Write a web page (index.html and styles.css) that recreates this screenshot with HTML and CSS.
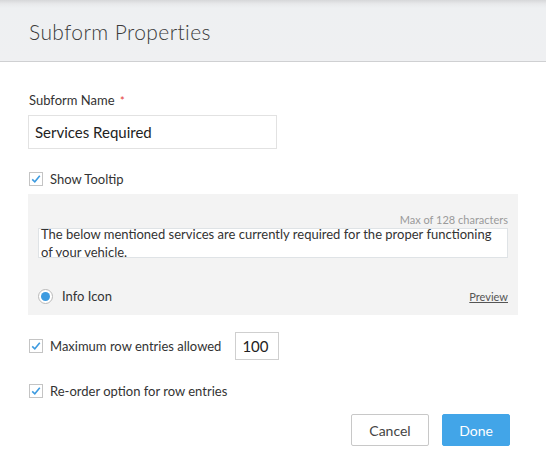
FILE: index.html
```html
<!DOCTYPE html>
<html>
<head>
<meta charset="utf-8">
<link rel="stylesheet" href="styles.css">
</head>
<body>
<div class="dialog">
  <div class="header"><h1 class="title">Subform Properties</h1></div>
  <div class="content">
    <div class="label">Subform Name <span class="req">*</span></div>
    <div class="text-input name-input">Services Required</div>
    <div class="check-row tooltip-row">
      <span class="cb"><svg width="14" height="14" viewBox="0 0 14 14"><rect x="0.5" y="0.5" width="13" height="13" fill="#fff" stroke="#c4c4c4"/><path d="M3.2 7.4 L5.8 9.8 L10.8 3.8" fill="none" stroke="#3d9be0" stroke-width="1.6"/></svg></span>
      <span>Show Tooltip</span>
    </div>
    <div class="panel">
      <div class="max-note">Max of 128 characters</div>
      <div class="textarea"><div class="ta-text">The below mentioned services are currently required for the proper functioning of your vehicle.</div></div>
      <div class="panel-foot">
        <div class="radio-row">
          <span class="radio"><span class="dot"></span></span>
          <span>Info Icon</span>
        </div>
        <span class="preview">Preview</span>
      </div>
    </div>
    <div class="check-row max-row">
      <span class="cb"><svg width="14" height="14" viewBox="0 0 14 14"><rect x="0.5" y="0.5" width="13" height="13" fill="#fff" stroke="#c4c4c4"/><path d="M3.2 7.4 L5.8 9.8 L10.8 3.8" fill="none" stroke="#3d9be0" stroke-width="1.6"/></svg></span>
      <span>Maximum row entries allowed</span>
      <div class="num-input">100</div>
    </div>
    <div class="check-row reorder-row">
      <span class="cb"><svg width="14" height="14" viewBox="0 0 14 14"><rect x="0.5" y="0.5" width="13" height="13" fill="#fff" stroke="#c4c4c4"/><path d="M3.2 7.4 L5.8 9.8 L10.8 3.8" fill="none" stroke="#3d9be0" stroke-width="1.6"/></svg></span>
      <span>Re-order option for row entries</span>
    </div>
    <div class="actions">
      <button class="btn cancel">Cancel</button>
      <button class="btn done">Done</button>
    </div>
  </div>
</div>
</body>
</html>
```
FILE: styles.css
```css
* { box-sizing: border-box; }
html, body { margin: 0; padding: 0; background: #fff; }
body { font-family: Lato, "Open Sans", sans-serif; color: #333; width: 546px; height: 460px; overflow: hidden; }
.dialog { width: 546px; }
.header {
  height: 62px;
  background: linear-gradient(to bottom, #d6d7d9 0px, #e8e9eb 4px, #eef0f2 8px, #eff0f2 100%);
  border-bottom: 1px solid #cfd0d2;
  display: flex;
  align-items: center;
  padding: 0 29px;
}
.title { margin: 0; font-size: 21px; font-weight: 300; color: #3a3a3a; letter-spacing: 0.4px; padding-top: 2px; }
.content { padding: 30px 28px 0 28px; }
.label { font-size: 13px; line-height: 16px; color: #333; padding-left: 1px; }
.req { color: #e53935; font-size: 11px; margin-left: 2px; }
.text-input {
  margin-top: 6px;
  width: 249px; height: 34px;
  border: 1px solid #e2e2e2;
  font-size: 15px; line-height: 32px;
  padding-left: 6px; color: #222;
}
.check-row { display: flex; align-items: center; font-size: 13px; color: #333; }
.cb { width: 14px; height: 14px; display: block; margin-left: 1px; margin-right: 7px; }
.cb svg { display: block; }
.tooltip-row { margin-top: 23px; height: 14px; }
.panel {
  margin-top: 8px;
  width: 490px; height: 121px;
  background: #f3f3f3;
  padding: 19px 10px 0 10px;
}
.max-note { text-align: right; font-size: 11px; line-height: 14px; color: #9a9a9a; }
.textarea {
  margin-top: 1px;
  height: 30px;
  background: #fff;
  border: 1px solid #dfe3e6;
  padding: 0 2px; overflow: hidden;
}
.ta-text { font-size: 13px; line-height: 18px; color: #333; margin-top: -4px; }
.panel-foot { margin-top: 30px; display: flex; align-items: center; justify-content: space-between; height: 16px; }
.radio-row { display: flex; align-items: center; font-size: 13px; }
.radio {
  width: 15px; height: 15px; border-radius: 50%;
  border: 1px solid #b9b9b9; background: #fff;
  display: flex; align-items: center; justify-content: center;
  margin-right: 9px;
}
.dot { width: 9px; height: 9px; border-radius: 50%; background: #3d9be0; }
.preview { font-size: 11px; color: #555; text-decoration: underline; }
.max-row { margin-top: 17px; height: 28px; }
.num-input {
  margin-left: 14px;
  width: 44px; height: 28px;
  border: 1px solid #cfcfcf;
  font-size: 15px; line-height: 26px; padding-left: 6px; color: #222;
}
.reorder-row { margin-top: 24px; height: 14px; }
.actions { margin-top: 16px; display: flex; justify-content: flex-end; gap: 13px; padding-right: 8px; }
.btn { height: 32px; font-family: Lato, "Open Sans", sans-serif; font-size: 14px; border-radius: 2px; cursor: pointer; }
.cancel { width: 78px; background: #fff; border: 1px solid #c8c8c8; color: #444; }
.done { width: 68px; background: #42a5e8; border: 1px solid #42a5e8; color: #fff; }
```
